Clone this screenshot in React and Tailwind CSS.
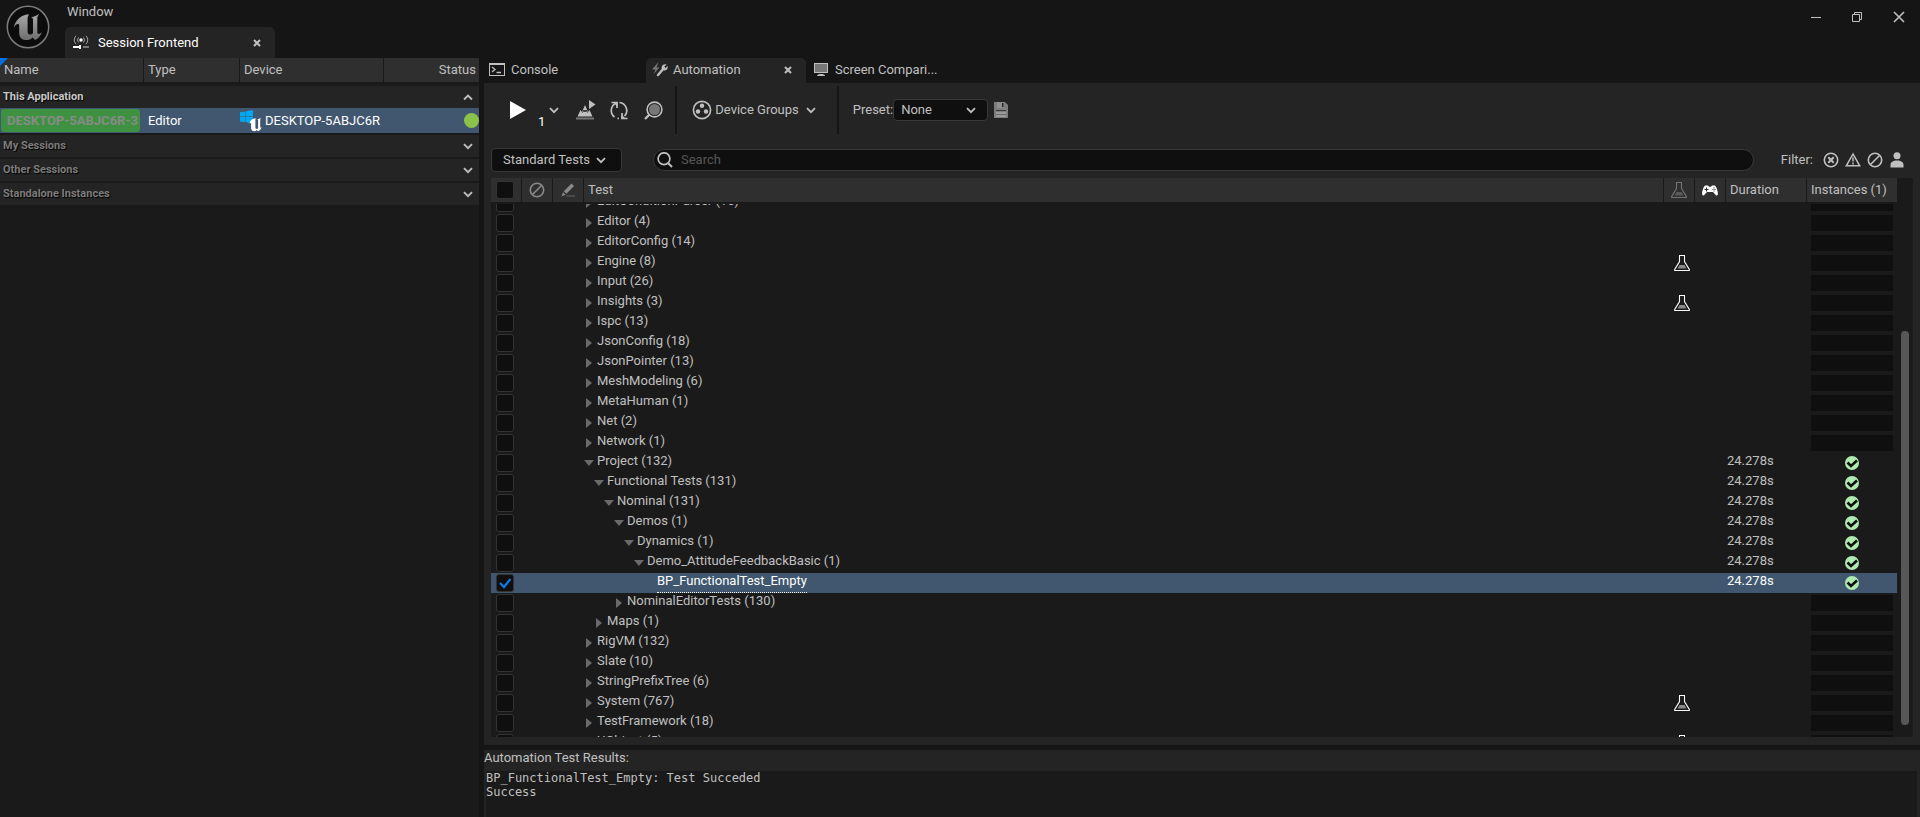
import { useEffect, useRef, useState } from "react";

const TESTS = [
  { name: "EditConditionParser (16)", depth: 0 },
  { name: "Editor (4)", depth: 0 },
  { name: "EditorConfig (14)", depth: 0 },
  { name: "Engine (8)", depth: 0, flask: true },
  { name: "Input (26)", depth: 0 },
  { name: "Insights (3)", depth: 0, flask: true },
  { name: "Ispc (13)", depth: 0 },
  { name: "JsonConfig (18)", depth: 0 },
  { name: "JsonPointer (13)", depth: 0 },
  { name: "MeshModeling (6)", depth: 0 },
  { name: "MetaHuman (1)", depth: 0 },
  { name: "Net (2)", depth: 0 },
  { name: "Network (1)", depth: 0 },
  { name: "Project (132)", depth: 0, open: true, duration: "24.278s" },
  { name: "Functional Tests (131)", depth: 1, open: true, duration: "24.278s" },
  { name: "Nominal (131)", depth: 2, open: true, duration: "24.278s" },
  { name: "Demos (1)", depth: 3, open: true, duration: "24.278s" },
  { name: "Dynamics (1)", depth: 4, open: true, duration: "24.278s" },
  { name: "Demo_AttitudeFeedbackBasic (1)", depth: 5, open: true, duration: "24.278s" },
  { name: "BP_FunctionalTest_Empty", depth: 6, leaf: true, duration: "24.278s" },
  { name: "NominalEditorTests (130)", depth: 3 },
  { name: "Maps (1)", depth: 1 },
  { name: "RigVM (132)", depth: 0 },
  { name: "Slate (10)", depth: 0 },
  { name: "StringPrefixTree (6)", depth: 0 },
  { name: "System (767)", depth: 0, flask: true },
  { name: "TestFramework (18)", depth: 0 },
  { name: "UObject (5)", depth: 0, flask: true },
];

const SELECTED = "BP_FunctionalTest_Empty";
const ROW_GRID =
  "grid grid-cols-[31px_31px_31px_minmax(0,1fr)_31px_31px_81px_90px]";

const Chevron = ({ up, className = "" }) => (
  <svg
    width="10"
    height="7"
    viewBox="0 0 10 7"
    fill="none"
    stroke="currentColor"
    strokeWidth="1.8"
    className={className}
  >
    <path d={up ? "M1 5.5 5 1.5 9 5.5" : "M1 1.2 5 5.2 9 1.2"} />
  </svg>
);

const CloseX = () => (
  <svg width="8" height="8" viewBox="0 0 8 8" stroke="currentColor" strokeWidth="2">
    <path d="M1 1 7 7M7 1 1 7" />
  </svg>
);

const UnrealLogo = () => (
  <svg width="44" height="44" viewBox="0 0 44 44">
    <defs>
      <linearGradient id="logoFill" x1="0" y1="0" x2="0" y2="1">
        <stop offset="0" stopColor="#a8a8a8" />
        <stop offset="1" stopColor="#6e6e6e" />
      </linearGradient>
    </defs>
    <circle cx="22" cy="22" r="20.7" fill="#0c0c0c" stroke="#7d7d7d" strokeWidth="1.5" />
    <path
      fill="url(#logoFill)"
      d="M20.5 9.5c-6 1.500-11 5.500-12.800 13 1.600-2.300 3-3.400 4.200-3.400.9 0 1.300.6 1.300 1.700v7.400c0 4.600 3.300 6.900 7.300 6.900 2.500 0 4.500-.8 6-2.600l2.600 2.500c3-1.400 5.600-4 6.700-8-1.300 1.400-2.300 1.900-3.100 1.900-1 0-1.400-.7-1.400-2V13.600c0-1.700.6-3.100 2-4.800-2.500 1.700-5.200 2.900-8.300 3.600 1.500.3 2 1.100 2 2.600v13.200c-.7.8-1.700 1.400-2.900 1.400-1.600 0-2.500-.9-2.500-2.800V14.200c0-2 .4-3.200 1.600-4.600z"
    />
  </svg>
);

const SessionIcon = () => (
  <svg width="16" height="15" viewBox="0 0 16 15" fill="none" stroke="#c0c0c0">
    <circle cx="8" cy="5" r="1.7" fill="#fff" stroke="none" />
    <path
      d="M5.5 2.5a4 4 0 0 0 0 5M10.5 2.5a4 4 0 0 1 0 5M3 .8a6.500 6.500 0 0 0 0 8.400M13 .8a6.500 6.500 0 0 1 0 8.400"
      stroke="#a0a0a0"
    />
    <path d="M0 12h8" stroke="#fff" strokeWidth="2" />
    <path d="M10 12h6" stroke="#777" strokeWidth="2" />
    <path d="M7 10v4" stroke="#fff" strokeWidth="2" />
  </svg>
);

const ConsoleIcon = () => (
  <svg width="16" height="13" viewBox="0 0 16 13" fill="none" stroke="#c0c0c0">
    <rect x=".5" y=".5" width="15" height="12" />
    <path d="M0 1h16" strokeWidth="2" />
    <path d="m3 4 3 2.500L3 9M7.500 9.500H12" strokeWidth="1.3" />
  </svg>
);

const AutomationIcon = () => (
  <svg width="16" height="15" viewBox="0 0 16 15">
    <path d="M6.500 0 0 7.500h3.500L1.500 12 7.500 5.500H4.500z" fill="#777" />
    <path d="M6 13 12 6" stroke="#c0c0c0" strokeWidth="2.400" strokeLinecap="round" />
    <path d="M14.500 2.500 12 5l1 1.500L15.500 4c.8 2.200-.6 4.500-3 4.500-2.300 0-3.500-2.300-2.600-4 .7-1.600 2.600-2.600 4.600-2z" fill="#c0c0c0" />
  </svg>
);

const MonitorIcon = () => (
  <svg width="14" height="13" viewBox="0 0 14 13">
    <rect x=".5" y=".5" width="13" height="9" fill="#777" stroke="#c0c0c0" />
    <path d="M3 13c0-1.500 2-2 4-2s4 .5 4 2z" fill="#c0c0c0" />
  </svg>
);

const LevelIcon = () => (
  <svg width="20" height="20" viewBox="0 0 20 20">
    <path d="M13 0l6.500 4.500L13 9z" fill="#c0c0c0" />
    <path d="M1.500 16.500 4.500 10l1.500 2L9 5l3 7 1.500-2 3 6.500z" fill="#c0c0c0" />
    <path d="M6.500 12.500 8 10l1 2 1-2 1.500 2.500" stroke="#242424" fill="none" />
    <path d="M0 18.500h18" stroke="#777" strokeWidth="2" />
  </svg>
);

const RefreshIcon = () => (
  <svg width="19" height="19" viewBox="0 0 19 19" fill="none" stroke="#c0c0c0" strokeWidth="1.7">
    <path d="M5.500 2.500A8 8 0 0 0 4.500 16M9.500 1.500a8 8 0 0 1 5 13.500M7.500 17.400 9 17.500" />
    <path d="M1.500 1.500h5.500V7M17.500 17.500H12V12" />
    <path d="M3 1h4.500v4.500zM16 18h-4.500v-4.500z" fill="#c0c0c0" stroke="none" />
  </svg>
);

const FindIcon = () => (
  <svg width="19" height="19" viewBox="0 0 19 19" fill="none" stroke="#c0c0c0">
    <circle cx="10.500" cy="8.500" r="7.400" strokeWidth="1.600" />
    <circle cx="10.500" cy="8.500" r="5.500" fill="#777" stroke="none" />
    <path d="M5.500 13.500 1 18" strokeWidth="2.400" />
  </svg>
);

const DeviceGroupsIcon = () => (
  <svg width="20" height="20" viewBox="0 0 20 20" fill="#c0c0c0">
    <circle cx="10" cy="10" r="8.600" fill="none" stroke="#c0c0c0" strokeWidth="1.600" />
    <circle cx="10" cy="5.800" r="2.200" />
    <circle cx="6" cy="11.500" r="2.200" />
    <circle cx="14" cy="11.500" r="2.200" />
  </svg>
);

const SaveIcon = () => (
  <svg width="14" height="16" viewBox="0 0 14 16">
    <path d="M0 0h11l3 3v13H0z" fill="#7d7d7d" />
    <path d="M3 0h7v6H3z" fill="#8f8f8f" />
    <path d="M8 1h1.500v4H8z" fill="#242424" />
    <path d="M2 8h10v1H2z" fill="#3a3a3a" />
    <path d="M2 10h10v5H2z" fill="#9a9a9a" />
    <path d="M2 12h10v1H2z" fill="#6a6a6a" />
  </svg>
);

const SearchIcon = () => (
  <svg width="16" height="16" viewBox="0 0 16 16" fill="none" stroke="#c0c0c0">
    <circle cx="7" cy="6.700" r="5.900" strokeWidth="1.700" />
    <path d="m11 11 4 4" strokeWidth="2" />
  </svg>
);

const BlockedIcon = () => (
  <svg width="16" height="16" viewBox="0 0 16 16" fill="none" stroke="currentColor" strokeWidth="1.600">
    <circle cx="8" cy="8" r="6.700" />
    <path d="M3.500 12.500 12.500 3.500" />
  </svg>
);

const ErrorIcon = () => (
  <svg width="16" height="16" viewBox="0 0 16 16" fill="none" stroke="currentColor">
    <circle cx="8" cy="8" r="6.700" strokeWidth="1.600" />
    <path d="m5.300 5.300 5.400 5.400M10.700 5.300l-5.400 5.400" strokeWidth="2" />
  </svg>
);

const WarningIcon = () => (
  <svg width="16" height="16" viewBox="0 0 16 16" fill="none" stroke="currentColor">
    <path d="M8 2 1.300 13.800h13.400z" strokeWidth="1.500" />
    <path d="M8 5.500v4M8 10.500v2" strokeWidth="1.500" />
  </svg>
);

const PersonIcon = () => (
  <svg width="14" height="16" viewBox="0 0 14 16" fill="currentColor">
    <circle cx="7" cy="3.800" r="3.500" />
    <path d="M.5 15.500V13C.5 10 3 8.500 7 8.500s6.500 1.500 6.500 4.500v2.500z" />
  </svg>
);

const PencilIcon = () => (
  <svg width="14" height="14" viewBox="0 0 14 14" fill="#8a8a8a">
    <path d="M10.500.5 13 3 5.500 10.800 2.800 8.200zM2 9.200l2.600 2.600L.5 13.500z" />
    <path d="M5.500 12.500H14v1H5.500z" fill="#666" />
  </svg>
);

const FlaskIcon = ({ dim }) => (
  <svg
    width="16"
    height="16"
    viewBox="0 0 16 16"
    fill="none"
    stroke={dim ? "#747474" : "#fff"}
  >
    <path d="M5 .5h6M5.500 1v5.500L.7 14.500v1h14.600v-1L10.500 6.500V1" strokeWidth="1.100" />
    <path d="M5.500 10h5l2 3.500h-9z" fill={dim ? "#5a5a5a" : "#8a8a8a"} stroke="none" />
  </svg>
);

const GamepadIcon = () => (
  <svg width="16" height="11" viewBox="0 0 16 11">
    <path d="M3 .5h3l1 1.200h2L10 .5h3c1.500 1.500 3 5.500 2.900 8.500 0 1.500-1.400 1.800-2.200.9L11 7H5L2.300 9.900C1.500 10.800.1 10.500.1 9 0 6 1.500 2 3 .5z" fill="#fff" />
    <path d="M4.500 2.500v4M2.500 4.500h4" stroke="#2f2f2f" strokeWidth="1.200" />
    <path d="M10.500 4h1v1h-1zM12.500 4h1v1h-1zM11.500 2.500h1v1h-1zM11.500 5.500h1v1h-1z" fill="#2f2f2f" />
  </svg>
);

const PassIcon = () => (
  <svg width="14" height="14" viewBox="0 0 14 14">
    <circle cx="7" cy="7" r="7" fill="#aeeab0" />
    <path d="M2.500 6.500 6 10l6-5.500" fill="none" stroke="#0f0f0f" strokeWidth="2.600" />
  </svg>
);

const DeviceIcon = () => (
  <svg width="22" height="22" viewBox="0 0 22 22">
    <path d="M0 2.200 5.500 1.400V6.500H0zM6 1.300 13 0v6.500H6zM0 7h5.500v5.200L0 11.500zM6 7h7v6.500L6 12.300z" fill="#00a8f0" />
    <path
      d="M14 8.500c-2.500.8-4 2.500-4.600 5 1-.9 1.700-.8 1.700.2v4c0 2.300 1.200 3.500 3 3.500 1.200 0 2-.4 2.700-1.200l1.200 1.200c1.700-.7 3-2 3.700-3.900-1 .6-1.500.4-1.500-.5V10c0-1 .4-1.600 1-2.300-1.300.9-2.600 1.400-4 1.700.7.200.9.600.9 1.300v7.500c-.4.5-.8.700-1.400.7-.8 0-1.300-.5-1.300-1.400v-7c0-1 0-1.500.6-2z"
      fill="#fff"
    />
  </svg>
);

const CheckBox = ({ label, checked, onChange }) => (
  <label className="relative block size-[18px]">
    <input
      type="checkbox"
      aria-label={label}
      checked={checked}
      onChange={onChange}
      className="peer block size-[18px] appearance-none rounded-[3px] border border-[#333333] bg-[#0f0f0f]"
    />
    <svg
      viewBox="0 0 18 18"
      fill="none"
      stroke="#0e7ae6"
      strokeWidth="2.200"
      className="pointer-events-none absolute inset-0 hidden peer-checked:block"
    >
      <path d="m4 9 4 4 6.500-8" />
    </svg>
  </label>
);

const SessionGroup = ({ title, open, children }) => (
  <section className="mb-0.5">
    <button
      className={`flex h-[22px] w-full items-center justify-between bg-[#242424] pr-[6px] pl-[3px] text-[11px] font-bold [text-shadow:1px_1px_1px_#000] ${
        open ? "text-[#c8c8c8]" : "text-[#7c7c7c]"
      }`}
    >
      <span>{title}</span>
      <Chevron up={open} className="text-[#c0c0c0]" />
    </button>
    {children}
  </section>
);

const SessionBrowser = () => (
  <aside className="w-[479px] shrink-0 bg-[#1a1a1a]">
    <div className="relative mb-1 grid h-6 grid-cols-[144px_96px_144px_95px] bg-[#2f2f2f] leading-6">
      <span className="absolute top-0 left-0 size-2 bg-[#0070e0] [clip-path:polygon(0_0,100%_0,0_100%)]" />
      <span className="border-r border-[#1a1a1a] pl-1">Name</span>
      <span className="border-r border-[#1a1a1a] pl-1">Type</span>
      <span className="border-r border-[#1a1a1a] pl-1">Device</span>
      <span className="pr-[3px] text-right">Status</span>
    </div>
    <SessionGroup title="This Application" open>
      <div className="grid h-[25px] grid-cols-[144px_96px_144px_95px] items-center bg-[#40576f] text-white">
        <span className="mr-1 ml-px h-[23px] overflow-hidden rounded-[3px] bg-[#3f9142] pl-[6px] leading-6 font-bold whitespace-nowrap text-[#858b85]">
          DESKTOP-5ABJC6R-3
        </span>
        <span className="pl-1">Editor</span>
        <span className="flex items-center gap-[3px] whitespace-nowrap">
          <DeviceIcon />
          DESKTOP-5ABJC6R
        </span>
        <span className="size-[15px] justify-self-end rounded-full bg-[#8bc34a]" />
      </div>
    </SessionGroup>
    <SessionGroup title="My Sessions" />
    <SessionGroup title="Other Sessions" />
    <SessionGroup title="Standalone Instances" />
  </aside>
);

const TitleBar = () => (
  <header className="flex h-[58px] shrink-0 justify-between">
    <div className="flex">
      <div className="w-[65px] pt-[5px] pl-[6px]">
        <UnrealLogo />
      </div>
      <div className="flex flex-col justify-between">
        <button className="self-start pl-0.5 leading-6">Window</button>
        <div className="flex h-[31px] w-[210px] items-center rounded-t-[5px] bg-[#242424] pr-[14px] pl-2 text-white">
          <SessionIcon />
          <span className="ml-[9px] flex-1">Session Frontend</span>
          <button aria-label="Close Session Frontend" className="text-[#c0c0c0]">
            <CloseX />
          </button>
        </div>
      </div>
    </div>
    <div className="flex h-[34px] items-center gap-[31px] pr-[15px]">
      <button aria-label="Minimize">
        <svg width="10" height="10" viewBox="0 0 10 10" stroke="#c0c0c0">
          <path d="M0 5.500h10" />
        </svg>
      </button>
      <button aria-label="Restore">
        <svg width="10" height="10" viewBox="0 0 10 10" stroke="#c0c0c0" fill="none">
          <path d="M.5 2.500h7v7h-7zM2.500 2.500v-2h7v7h-2" />
        </svg>
      </button>
      <button aria-label="Close">
        <svg width="12" height="12" viewBox="0 0 12 12" stroke="#c0c0c0" strokeWidth="1.600">
          <path d="m1 1 10 10M11 1 1 11" />
        </svg>
      </button>
    </div>
  </header>
);

const PanelTabs = () => (
  <nav className="flex h-[25px] bg-[#151515]">
    <button className="flex w-[162px] items-center gap-[6px] pb-0.5 pl-[5px]">
      <ConsoleIcon />
      Console
    </button>
    <div className="flex w-[160px] items-center rounded-t-[5px] bg-[#242424] pr-[14px] pb-0.5 pl-[6px]">
      <AutomationIcon />
      <span className="ml-[5px] flex-1">Automation</span>
      <button aria-label="Close Automation">
        <CloseX />
      </button>
    </div>
    <button className="flex items-center gap-[7px] pb-0.5 pl-2">
      <MonitorIcon />
      Screen Compari...
    </button>
  </nav>
);

const Toolbar = () => (
  <div className="flex h-[54px] items-center">
    <button aria-label="Start tests" className="ml-[26px] flex items-center text-white">
      <svg width="16" height="18" viewBox="0 0 16 18" fill="currentColor">
        <path d="M0 0l16 9-16 9z" />
      </svg>
      <span className="ml-3 flex h-10 items-end">1</span>
    </button>
    <button aria-label="Run options" className="ml-1">
      <Chevron />
    </button>
    <button aria-label="Run level test" className="ml-[17px]">
      <LevelIcon />
    </button>
    <button aria-label="Refresh tests" className="ml-[14px]">
      <RefreshIcon />
    </button>
    <button aria-label="Find workers" className="ml-[15px]">
      <FindIcon />
    </button>
    <span className="ml-3 h-12 w-0.5 bg-[#151515]" />
    <button className="ml-[15px] flex items-center gap-[3px]">
      <DeviceGroupsIcon />
      Device Groups
      <Chevron className="ml-1" />
    </button>
    <span className="ml-[21px] h-12 w-0.5 bg-[#151515]" />
    <label htmlFor="preset" className="ml-[14px]">
      Preset:
    </label>
    <span className="relative flex items-center">
      <select
        id="preset"
        className="h-[22px] w-[95px] appearance-none rounded border border-[#383838] bg-[#0f0f0f] pl-[7px]"
      >
        <option>None</option>
      </select>
      <Chevron className="pointer-events-none absolute right-3" />
    </span>
    <button aria-label="Save preset" className="ml-[6px]">
      <SaveIcon />
    </button>
  </div>
);

const FilterRow = () => (
  <div className="mt-[11px] flex h-6 items-center pr-4 pl-[7px]">
    <span className="relative flex items-center">
      <select
        aria-label="Test group"
        className="h-6 w-[131px] appearance-none rounded border border-[#383838] bg-[#0f0f0f] pl-[11px]"
      >
        <option>Standard Tests</option>
      </select>
      <Chevron className="pointer-events-none absolute right-4" />
    </span>
    <label className="ml-[31px] flex h-[22px] flex-1 items-center rounded-full border border-[#383838] bg-[#0f0f0f] pl-[3px]">
      <SearchIcon />
      <input
        type="text"
        placeholder="Search"
        aria-label="Search tests"
        className="ml-2 min-w-0 flex-1 bg-transparent outline-none placeholder:text-[#575757]"
      />
    </label>
    <span className="ml-[27px]">Filter:</span>
    <div className="ml-[10px] flex items-center gap-[6px]">
      <button aria-label="Errors">
        <ErrorIcon />
      </button>
      <button aria-label="Warnings">
        <WarningIcon />
      </button>
      <button aria-label="Skipped">
        <BlockedIcon />
      </button>
      <button aria-label="Developer content" className="ml-px">
        <PersonIcon />
      </button>
    </div>
  </div>
);

const TestRow = ({ test, checked, onToggle }) => {
  const selected = test.name === SELECTED;
  return (
    <tr className={`${ROW_GRID} h-5 ${selected ? "bg-[#40576f] text-white" : ""}`}>
      <td className="pt-px pl-[5px]">
        <CheckBox label={test.name} checked={checked} onChange={onToggle} />
      </td>
      <td />
      <td />
      <td className="flex" style={{ paddingLeft: test.depth * 10 }}>
        <svg width="12" height="20" viewBox="0 0 12 20" fill="#6a6a6a" className="mr-px shrink-0">
          {!test.leaf && (
            <path d={test.open ? "M0 7h10l-5 6z" : "M2 5v10l6-5z"} />
          )}
        </svg>
        <span
          className={`h-5 leading-4 ${selected ? "border-b border-dotted border-white" : ""}`}
        >
          {test.name}
        </span>
      </td>
      <td className="flex items-start justify-center pt-0.5 pl-1">
        {test.flask && <FlaskIcon />}
      </td>
      <td />
      <td className="pl-px leading-4">{test.duration}</td>
      <td className="pt-0.5 pr-1 pl-1">
        {test.duration ? (
          <div className="flex justify-center pt-px">
            <PassIcon />
          </div>
        ) : (
          <div className="h-4 bg-[#0f0f0f]" />
        )}
      </td>
    </tr>
  );
};

const TestTable = () => {
  const bodyRef = useRef(null);
  const [checked, setChecked] = useState([SELECTED]);

  useEffect(() => {
    bodyRef.current.scrollTop = 11;
  }, []);

  const toggle = (name) => {
    setChecked(
      checked.includes(name)
        ? checked.filter((n) => n !== name)
        : [...checked, name]
    );
  };

  return (
    <div className="mx-[7px] mt-[6px] mb-2 flex min-h-0 flex-1 bg-[#1a1a1a]">
      <table className="flex min-w-0 flex-1 flex-col">
        <thead className="mb-0.5 block">
          <tr className={`${ROW_GRID} h-6 bg-[#2f2f2f] leading-6 *:border-r *:border-[#1a1a1a] *:last:border-r-0`}>
            <th className="pt-[3px] pl-[5px]">
              <CheckBox
                label="Select all tests"
                checked={false}
                onChange={() => setChecked([])}
              />
            </th>
            <th className="flex items-center justify-center text-[#8a8a8a]">
              <BlockedIcon />
            </th>
            <th className="flex items-center justify-center">
              <PencilIcon />
            </th>
            <th className="pl-1 text-left font-normal">Test</th>
            <th className="flex items-center justify-center">
              <FlaskIcon dim />
            </th>
            <th className="flex items-center justify-center">
              <GamepadIcon />
            </th>
            <th className="pl-1 text-left font-normal">Duration</th>
            <th className="pl-1 text-left font-normal whitespace-nowrap">Instances (1)</th>
          </tr>
        </thead>
        <tbody ref={bodyRef} className="block min-h-0 flex-1 overflow-hidden">
          {TESTS.map((test) => (
            <TestRow
              key={test.name}
              test={test}
              checked={checked.includes(test.name)}
              onToggle={() => toggle(test.name)}
            />
          ))}
        </tbody>
      </table>
      <div className="flex w-4 flex-col justify-end px-1 pb-3">
        <div className="h-[72%] rounded-full bg-[#575757]" />
      </div>
    </div>
  );
};

const Results = () => (
  <section className="mt-[5px] flex h-[67px] shrink-0 flex-col bg-[#242424]">
    <h2 className="h-[21px] leading-4">Automation Test Results:</h2>
    <div className="mr-[3px] ml-0.5 flex-1 bg-[#1a1a1a] font-['DejaVu_Sans_Mono',monospace] text-[12px] leading-[14px]">
      <p>BP_FunctionalTest_Empty: Test Succeded</p>
      <p>Success</p>
    </div>
  </section>
);

const App = () => {
  return (
    <div className="flex h-screen flex-col overflow-hidden bg-[#151515] font-[Roboto,sans-serif] text-[13px] leading-4 text-[#c0c0c0]">
      <TitleBar />
      <div className="flex min-h-0 flex-1">
        <SessionBrowser />
        <main className="ml-[5px] flex min-w-0 flex-1 flex-col">
          <PanelTabs />
          <div className="flex min-h-0 flex-1 flex-col bg-[#242424]">
            <Toolbar />
            <FilterRow />
            <TestTable />
          </div>
          <Results />
        </main>
      </div>
    </div>
  );
};

export default App;
